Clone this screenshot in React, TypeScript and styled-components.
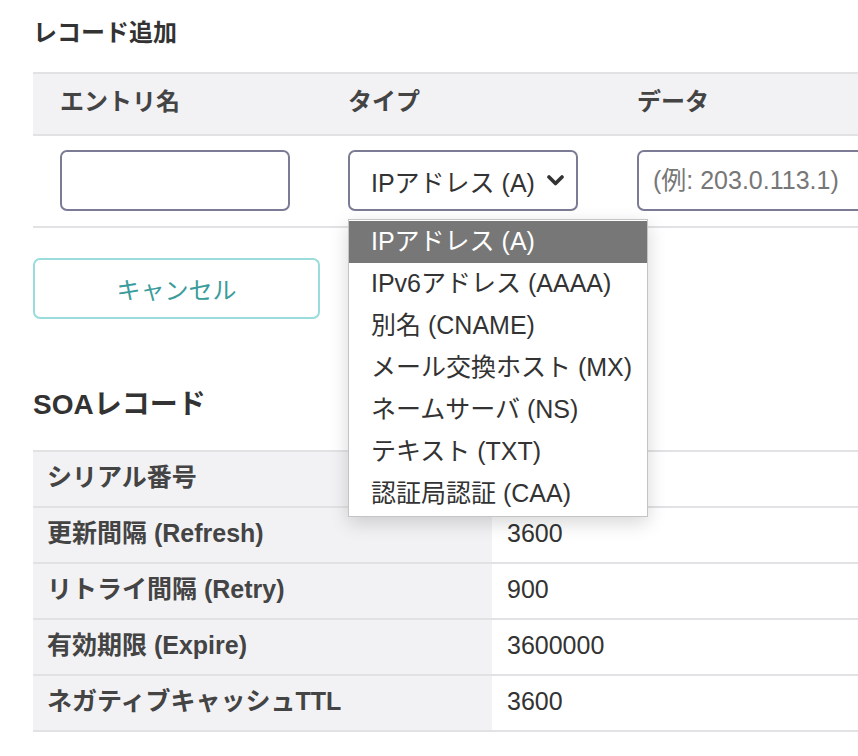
import styled, { createGlobalStyle } from "styled-components";

const GlobalStyle = createGlobalStyle`
  html, body {
    margin: 0;
    padding: 0;
    overflow: hidden;
    background: #ffffff;
  }
  body {
    font-family: "Liberation Sans", "Noto Sans CJK JP", sans-serif;
    color: #333333;
  }
`;

const Page = styled.main`
  width: 1000px;
  padding-left: 33px;
`;

const Title = styled.h2`
  margin: 0;
  padding-top: 15px;
  font-size: 24px;
  line-height: 36px;
  font-weight: bold;
  color: #333333;
`;

const EntryTable = styled.div`
  margin-top: 21px;
  display: grid;
  grid-template-columns: 288px 289px 1fr;
`;

const HeadCell = styled.div`
  box-sizing: border-box;
  height: 64px;
  background: #f2f2f4;
  border-top: 2px solid #e2e2e4;
  border-bottom: 2px solid #e2e2e4;
  display: flex;
  align-items: center;
  padding: 0 0 4px 27px;
  font-size: 24px;
  line-height: 1.2;
  font-weight: bold;
  color: #444444;
`;

const BodyCell = styled.div`
  position: relative;
  border-bottom: 2px solid #e2e2e4;
  padding: 14px 0 15px 27px;
`;

const TextInput = styled.input`
  box-sizing: border-box;
  width: 230px;
  height: 61px;
  border: 2px solid #7c7b95;
  border-radius: 7px;
  padding: 0 14px;
  font-family: inherit;
  font-size: 25px;
  color: #333333;
  background: #ffffff;
  outline: none;

  &::placeholder {
    color: #777777;
  }
`;

const SelectBox = styled.button`
  box-sizing: border-box;
  width: 230px;
  height: 61px;
  border: 2px solid #7c7b95;
  border-radius: 7px;
  padding: 0 12px 0 21px;
  display: flex;
  align-items: center;
  justify-content: space-between;
  font-family: inherit;
  font-size: 25px;
  color: #333333;
  background: #ffffff;
`;

const Menu = styled.ul`
  position: absolute;
  left: 27px;
  top: calc(100% - 7px);
  z-index: 10;
  box-sizing: border-box;
  width: 300px;
  margin: 0;
  padding: 1px 0;
  list-style: none;
  background: #ffffff;
  border: 1px solid #c4c4c4;
  box-shadow: 0 6px 18px rgba(0, 0, 0, 0.16);
`;

const MenuItem = styled.li<{ $active?: boolean }>`
  box-sizing: border-box;
  height: 42px;
  display: flex;
  align-items: center;
  padding: 0 0 3px 22px;
  font-size: 25px;
  line-height: 1.2;
  white-space: nowrap;
  background: ${(p) => (p.$active ? "#777777" : "transparent")};
  color: ${(p) => (p.$active ? "#ffffff" : "#333333")};
`;

const CancelButton = styled.button`
  box-sizing: border-box;
  margin-top: 30px;
  width: 287px;
  height: 61px;
  border: 2px solid #9adcdc;
  border-radius: 7px;
  background: #ffffff;
  font-family: inherit;
  font-size: 24px;
  color: #3a9c9c;
`;

const SectionTitle = styled.h2`
  margin: 65px 0 24px;
  font-size: 28px;
  line-height: 42px;
  font-weight: bold;
  color: #333333;
`;

const SoaTable = styled.div`
  display: grid;
  grid-template-columns: 459px 1fr;
  border-top: 2px solid #e2e2e4;
`;

const LabelCell = styled.div`
  box-sizing: border-box;
  height: 56px;
  display: flex;
  align-items: center;
  padding: 0 0 5px 14px;
  background: #f2f2f4;
  border-bottom: 2px solid #e2e2e4;
  font-size: 25px;
  line-height: 1.2;
  font-weight: bold;
  color: #444444;
`;

const ValueCell = styled.div`
  box-sizing: border-box;
  height: 56px;
  display: flex;
  align-items: center;
  padding: 0 0 5px 15px;
  border-bottom: 2px solid #e2e2e4;
  font-size: 25px;
  line-height: 1.2;
  color: #333333;
`;

const Chevron = () => (
  <svg width="17" height="11" viewBox="0 0 17 11">
    <path
      d="M2 2 L8.5 8.5 L15 2"
      fill="none"
      stroke="#333333"
      strokeWidth="3.6"
      strokeLinecap="round"
      strokeLinejoin="round"
    />
  </svg>
);

const types = [
  "IPアドレス (A)",
  "IPv6アドレス (AAAA)",
  "別名 (CNAME)",
  "メール交換ホスト (MX)",
  "ネームサーバ (NS)",
  "テキスト (TXT)",
  "認証局認証 (CAA)",
];

const soa = [
  { label: "シリアル番号", value: "" },
  { label: "更新間隔 (Refresh)", value: "3600" },
  { label: "リトライ間隔 (Retry)", value: "900" },
  { label: "有効期限 (Expire)", value: "3600000" },
  { label: "ネガティブキャッシュTTL", value: "3600" },
];

export default function App() {
  return (
    <Page>
      <GlobalStyle />
      <Title>レコード追加</Title>
      <EntryTable>
        <HeadCell>エントリ名</HeadCell>
        <HeadCell>タイプ</HeadCell>
        <HeadCell>データ</HeadCell>
        <BodyCell>
          <TextInput type="text" />
        </BodyCell>
        <BodyCell>
          <SelectBox type="button">
            <span>{types[0]}</span>
            <Chevron />
          </SelectBox>
          <Menu>
            {types.map((t, i) => (
              <MenuItem key={t} $active={i === 0}>
                {t}
              </MenuItem>
            ))}
          </Menu>
        </BodyCell>
        <BodyCell>
          <TextInput type="text" placeholder="(例: 203.0.113.1)" />
        </BodyCell>
      </EntryTable>
      <CancelButton type="button">キャンセル</CancelButton>
      <SectionTitle>SOAレコード</SectionTitle>
      <SoaTable>
        {soa.map((row) => (
          <>
            <LabelCell key={row.label + "-l"}>{row.label}</LabelCell>
            <ValueCell key={row.label + "-v"}>{row.value}</ValueCell>
          </>
        ))}
      </SoaTable>
    </Page>
  );
}
